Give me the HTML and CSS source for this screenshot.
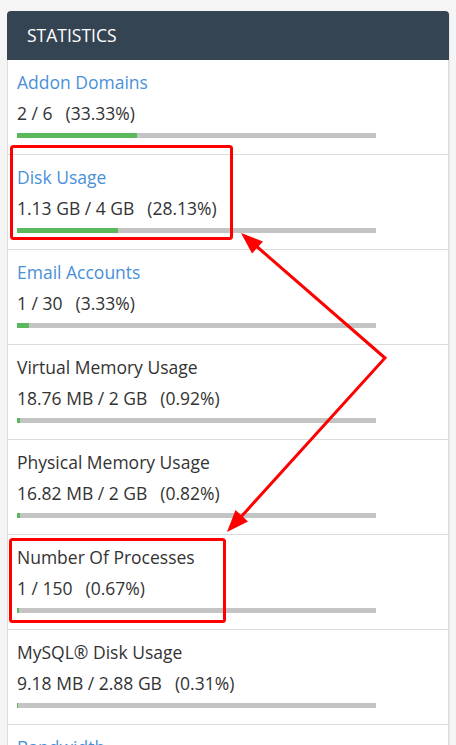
FILE: index.html
```html
<!DOCTYPE html>
<html>
<head>
<meta charset="utf-8">
<link rel="stylesheet" href="styles.css">
</head>
<body>
<div class="panel">
  <div class="panel-heading">STATISTICS</div>
  <div class="stat">
    <div class="title link">Addon Domains</div>
    <div class="value"><span>2 / 6</span><span class="pct">(33.33%)</span></div>
    <div class="bar"><div class="fill" style="width:33.33%"></div></div>
  </div>
  <div class="stat">
    <div class="title link">Disk Usage</div>
    <div class="value"><span>1.13 GB / 4 GB</span><span class="pct">(28.13%)</span></div>
    <div class="bar"><div class="fill" style="width:28.13%"></div></div>
  </div>
  <div class="stat">
    <div class="title link">Email Accounts</div>
    <div class="value"><span>1 / 30</span><span class="pct">(3.33%)</span></div>
    <div class="bar"><div class="fill" style="width:3.33%"></div></div>
  </div>
  <div class="stat">
    <div class="title">Virtual Memory Usage</div>
    <div class="value"><span>18.76 MB / 2 GB</span><span class="pct">(0.92%)</span></div>
    <div class="bar"><div class="fill" style="width:0.92%"></div></div>
  </div>
  <div class="stat">
    <div class="title">Physical Memory Usage</div>
    <div class="value"><span>16.82 MB / 2 GB</span><span class="pct">(0.82%)</span></div>
    <div class="bar"><div class="fill" style="width:0.82%"></div></div>
  </div>
  <div class="stat">
    <div class="title">Number Of Processes</div>
    <div class="value"><span>1 / 150</span><span class="pct">(0.67%)</span></div>
    <div class="bar"><div class="fill" style="width:0.67%"></div></div>
  </div>
  <div class="stat">
    <div class="title">MySQL® Disk Usage</div>
    <div class="value"><span>9.18 MB / 2.88 GB</span><span class="pct">(0.31%)</span></div>
    <div class="bar"><div class="fill" style="width:0.31%"></div></div>
  </div>
  <div class="stat">
    <div class="title link">Bandwidth</div>
    <div class="value"><span>0 bytes / ∞</span></div>
    <div class="bar"></div>
  </div>
</div>
<svg class="annot" width="456" height="745" viewBox="0 0 456 745">
  <g fill="none" stroke="#ff0000" stroke-width="3" stroke-linejoin="round">
    <rect x="11.5" y="146.5" width="220" height="92" rx="2"/>
    <rect x="10.5" y="539.5" width="214" height="82" rx="2"/>
    <polyline points="255,245 385,358 240,518" stroke-linejoin="miter"/>
  </g>
  <g fill="#ff0000">
    <polygon points="241,233 263,241.5 252,253.5"/>
    <polygon points="227,532 248,521.5 235.5,510"/>
  </g>
</svg>
</body>
</html>
```
FILE: styles.css
```css
html, body {
  margin: 0;
  padding: 0;
}
body {
  background: #f5f5f5;
  font-family: "Open Sans", "Liberation Sans", sans-serif;
  font-size: 17.5px;
  line-height: 24px;
  color: #333;
  height: 745px;
  overflow: hidden;
  position: relative;
}
.panel {
  margin: 11px 7px 0 7px;
  width: 440px;
  background: #fff;
  border: 1px solid #dcdcdc;
  border-top: none;
  border-radius: 4px 4px 0 0;
  box-shadow: 1px 0 1px rgba(0,0,0,0.06);
}
.panel-heading {
  background: #354452;
  color: #fff;
  padding: 12px 20px 13px 20px;
  height: 24px;
  border-radius: 4px 4px 0 0;
  margin: 0 -1px;
}
.stat {
  padding: 10px 9px 16px 9px;
  border-bottom: 1px solid #dddddd;
  display: flex;
  flex-direction: column;
}
.title {
  color: #333;
}
.title.link {
  color: #4a90d9;
}
.value {
  margin-top: 7px;
}
.pct {
  margin-left: 13px;
}
.bar {
  margin-top: 8px;
  width: 359px;
  height: 5px;
  background: #c4c4c4;
}
.fill {
  height: 100%;
  background: #5cb85c;
}
.annot {
  position: absolute;
  left: 0;
  top: 0;
  pointer-events: none;
}
```
